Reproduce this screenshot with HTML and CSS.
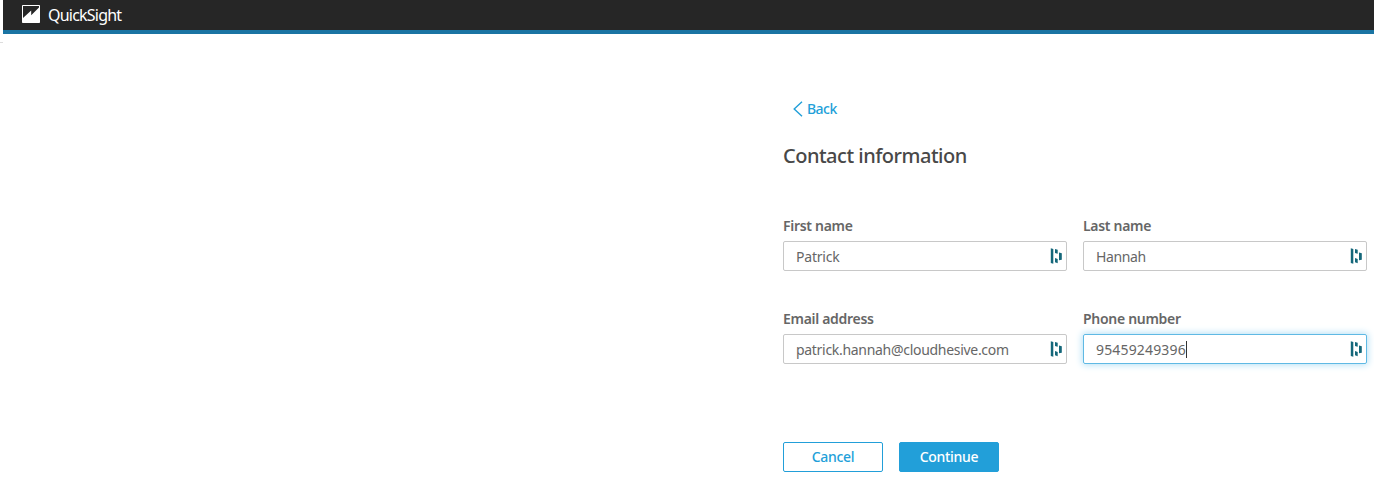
FILE: index.html
```html
<!DOCTYPE html>
<html lang="en">
<head>
<meta charset="utf-8">
<title>QuickSight</title>
<link rel="stylesheet" href="styles.css">
</head>
<body>
<svg width="0" height="0" class="symbols"><symbol id="manager" viewBox="0 0 12 16"><path d="M.8.3L3.3 1V15.7L.8 15ZM5 .9L7.7 1.8V5.8L5 4.9ZM5 10L7.7 11V15.2L5 14.2ZM9 4.4L11.8 5.3V11.7L9 12.2Z" fill="#14677a"/></symbol></svg>
<header class="topbar">
  <svg class="logo" width="18" height="18" viewBox="0 0 18 18"><rect width="18" height="18" rx=".8" fill="#fff"/><path d="M1 1H17V2.6L9.2 10.2V5.6L1 13Z" fill="#262626"/></svg>
  <span class="brand">QuickSight</span>
</header>
<div class="edge-rule"></div>
<main class="content">
  <a class="back"><svg width="10" height="16" viewBox="0 0 10 16"><path d="M9 .7L1.2 8L9 15.3" fill="none" stroke="#229fd9" stroke-width="1.4"/></svg><span class="back-text">Back</span></a>
  <h1 class="title"><span>Contact information</span></h1>
  <form class="fields">
    <div class="field"><label class="label"><span>First name</span></label><div class="input"><span class="value">Patrick</span><svg class="mgr" width="12" height="16"><use href="#manager"/></svg></div></div>
    <div class="field"><label class="label"><span>Last name</span></label><div class="input"><span class="value name">Hannah</span><svg class="mgr" width="12" height="16"><use href="#manager"/></svg></div></div>
    <div class="field"><label class="label"><span>Email address</span></label><div class="input"><span class="value email">patrick.hannah@cloudhesive.com</span><svg class="mgr" width="12" height="16"><use href="#manager"/></svg></div></div>
    <div class="field"><label class="label"><span>Phone number</span></label><div class="input focused"><span class="value phone">95459249396</span><i class="caret"></i><svg class="mgr" width="12" height="16"><use href="#manager"/></svg></div></div>
  </form>
  <div class="actions"><button class="button">Cancel</button><button class="button primary">Continue</button></div>
</main>
</body>
</html>
```
FILE: styles.css
```css
*{box-sizing:border-box}
body{margin:0;background:#fff;font-family:"Noto Sans",sans-serif;font-size:14px;color:#666;height:485px;overflow:hidden}
.symbols{display:none}
.topbar{height:34px;margin-left:3px;background:#262626;border-bottom:4px solid #1a74a3;display:flex;align-items:center;padding-left:19px}
.logo{margin-top:-2px}
.brand{color:#fff;font-size:16px;line-height:20px;margin-left:8px;margin-top:-1px;letter-spacing:-.78px}
.edge-rule{width:3px;height:1px;margin-top:8px;background:#ddd}
.content{margin-left:783px;padding-top:56px;width:584px}
.back{display:flex;align-items:center;gap:4px;height:20px;margin-left:10px;color:#229fd9;font-weight:500;letter-spacing:-.55px}
.back-text{line-height:18px}
.title{margin:22px 0 0;height:30px;line-height:30px;font-size:20px;font-weight:500;letter-spacing:-.5px;color:#484848}
.fields{display:grid;grid-template-columns:284px 284px;column-gap:16px;row-gap:39px;margin-top:46px}
.label{display:block;height:24px;line-height:18px;font-weight:600;letter-spacing:-.3px}
.input{height:30px;border:1px solid #c8c8c8;border-radius:2px;padding:0 4px 0 12px;display:flex;align-items:center}
.value{line-height:20px;padding-top:1px;letter-spacing:-.2px}
.name{letter-spacing:-.4px}
.email{letter-spacing:-.3px}
.phone{letter-spacing:.16px}
.mgr{margin-left:auto}
.focused{border-color:#5fb9e4;box-shadow:0 0 7px 1px #b5e0f5}
.caret{width:1px;height:17px;background:#333}
.actions{display:flex;gap:16px;margin-top:78px}
.button{width:100px;height:30px;border:1px solid #229fd9;border-radius:2px;background:#fff;color:#229fd9;font:500 14px "Noto Sans",sans-serif;letter-spacing:-.32px;padding:0 0 2px}
.primary{background:#229fd9;color:#fff}
```
